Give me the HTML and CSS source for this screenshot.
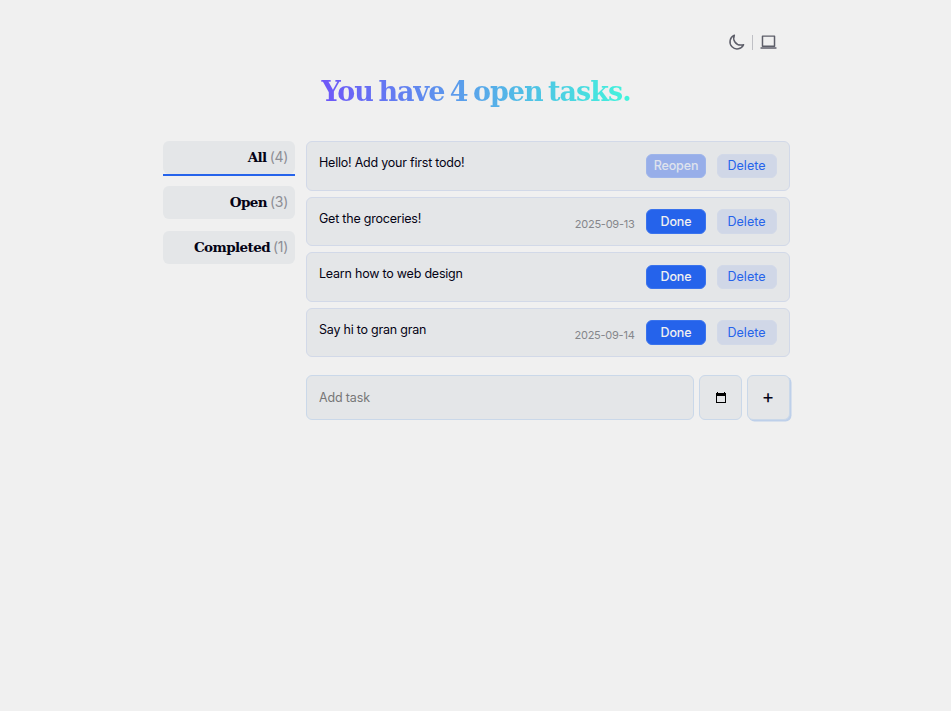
FILE: index.html
```html
<!DOCTYPE html>
<html lang="en">
<head>
<meta charset="utf-8">
<title>Tasks</title>
<link rel="stylesheet" href="styles.css">
</head>
<body>
<div class="app">
  <header class="tools">
    <svg class="icon" viewBox="0 0 24 24"><path d="M22 15A9.7 9.7 0 0 1 18.2 15.6 9.75 9.75 0 0 1 9 1.8 10 10 0 1 0 22 15Z"/></svg>
    <span class="divider"></span>
    <svg class="icon" viewBox="0 0 24 24"><path d="M3.5 3h17v14.2h-17zM1.5 19.8h21"/></svg>
  </header>
  <h1 class="title"><span class="title-text">You have 4 open tasks.</span></h1>
  <main class="layout">
    <nav class="filters">
      <a class="filter active"><b>All</b><span class="count">(4)</span></a>
      <a class="filter"><b>Open</b><span class="count">(3)</span></a>
      <a class="filter"><b>Completed</b><span class="count">(1)</span></a>
    </nav>
    <section>
      <ul class="tasks">
        <li class="task"><span class="name">Hello! Add your first todo!</span><button class="btn reopen">Reopen</button><button class="btn delete">Delete</button></li>
        <li class="task"><span class="name">Get the groceries!</span><time class="date">2025-09-13</time><button class="btn">Done</button><button class="btn delete">Delete</button></li>
        <li class="task"><span class="name">Learn how to web design</span><button class="btn">Done</button><button class="btn delete">Delete</button></li>
        <li class="task"><span class="name">Say hi to gran gran</span><time class="date">2025-09-14</time><button class="btn">Done</button><button class="btn delete">Delete</button></li>
      </ul>
      <form class="add">
        <input class="field" placeholder="Add task">
        <button class="square" type="button" aria-label="Date"><svg class="calendar" viewBox="0 0 10 11"><path d="M0 1h1V0h1v1h6V0h1v1h1v10H0zM1 4v6h8V4z" fill-rule="evenodd"/></svg></button>
        <button class="square plus" type="button">+</button>
      </form>
    </section>
  </main>
</div>
</body>
</html>
```

FILE: styles.css
```css
* { box-sizing: border-box; }
body {
  margin: 0;
  min-height: 100vh;
  background: #f0f0f0;
  color: #050315;
  font: 12.5px/20px Inter, sans-serif;
}
.app { width: 627px; margin-left: 162.5px; padding: 33px 0 40px; }
.tools {
  display: flex;
  align-items: center;
  justify-content: flex-end;
  gap: 7px;
  height: 18px;
  padding-right: 13px;
}
.icon { width: 17px; height: 17px; fill: none; stroke: #5d5e69; stroke-width: 2.1; stroke-linejoin: round; stroke-linecap: round; }
.divider { width: 1px; height: 15px; background: #bfc0c5; }
.title {
  display: flex;
  justify-content: center;
  height: 36px;
  margin: 23px 0 31px;
  font: bold 27px/36px "DejaVu Serif", serif;
  letter-spacing: -1px;
  word-spacing: -3px;
  white-space: nowrap;
}
.title-text {
  background: linear-gradient(90deg, #6e56f8, #42f5dc);
  background-clip: text;
  -webkit-background-clip: text;
  color: transparent;
}
.layout { display: grid; grid-template-columns: 132px 483.5px; gap: 11.5px; }
.filters { display: flex; flex-direction: column; gap: 12px; }
.filter {
  display: flex;
  justify-content: flex-end;
  align-items: center;
  gap: 3px;
  height: 33px;
  padding: 0 6.5px 1px 0;
  border-radius: 6px;
  background: #e4e6e8;
}
.filter b { font: bold 13.5px/20px "DejaVu Serif", serif; letter-spacing: -.6px; }
.count { font-size: 14px; letter-spacing: -.3px; color: #8d8e95; }
.filter.active { position: relative; }
.filter.active::after { content: ""; position: absolute; left: 0; right: 0; bottom: -1.5px; height: 1.5px; background: #2563eb; }
.tasks { display: flex; flex-direction: column; gap: 6px; margin: 0 0 18px; padding: 0; list-style: none; }
.task {
  display: flex;
  align-items: center;
  height: 49.5px;
  padding: 0 12px;
  border: 1px solid #d2d9e8;
  border-radius: 6px;
  background: #e4e6e8;
}
.name { flex: 1; padding-bottom: 5px; letter-spacing: -.22px; }
.date { padding-top: 5px; margin-right: 11.5px; font-size: 11px; letter-spacing: -.25px; color: #85868b; }
.btn {
  width: 60px;
  height: 24.5px;
  padding: 0;
  border: 1px solid #3a73ed;
  border-radius: 6px;
  background: #2563eb;
  color: #f0f0f0;
  font: 500 12.5px Inter, sans-serif;
  letter-spacing: -.15px;
}
.btn.reopen { background: #97aee9; border-color: #9eb5ea; color: #dfe3ed; }
.btn.delete { margin-left: 10.5px; background: #d0d7e7; border-color: #d2d9e8; color: #2563eb; font-weight: 400; letter-spacing: 0; }
.add { display: grid; grid-template-columns: 387.5px 43px 43px; gap: 5px; height: 45px; }
.field, .square {
  min-width: 0;
  border: 1px solid #cad8e9;
  border-radius: 6px;
  background: #e4e6e8;
  color: #050315;
  font: 12.5px Inter, sans-serif;
}
.field { padding: 0 12px; letter-spacing: -.15px; }
.field::placeholder { color: #777; }
.square { display: flex; align-items: center; justify-content: center; padding: 0; }
.calendar { width: 10px; height: 11px; margin-left: 1px; fill: #000; }
.plus { box-shadow: 1.5px 1.5px 0 0 #bed0ea; font-size: 19px; padding: 0 0 3px; }
```
